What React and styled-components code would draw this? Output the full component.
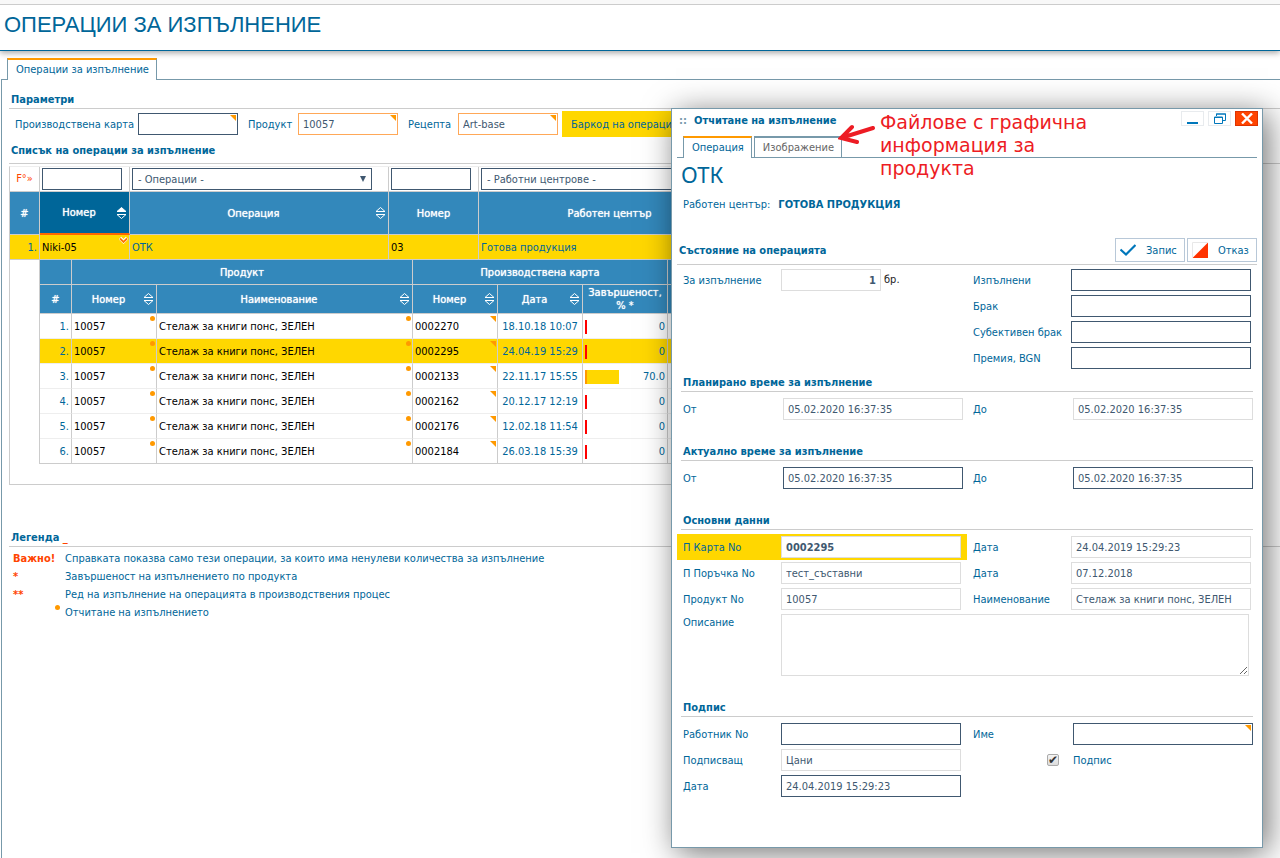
import React from 'react';
import styled, { createGlobalStyle, css } from 'styled-components';

const font = "'DejaVu Sans Condensed', 'Noto Sans', sans-serif";

const blue = '#006699';
const steel = '#7799aa';
const ink = '#405870';
const gold = '#ffd700';
const orange = '#ff9900';
const red = '#ff4400';
const line = '#cccccc';

const GlobalStyle = createGlobalStyle`
  * {
    box-sizing: border-box;
  }

  body {
    background: #fff;
    color: ${blue};
    font-family: ${font};
    font-size: 11px;
    line-height: 14px;
    margin: 0;
  }

  input, select, textarea, button {
    font-family: inherit;
    font-size: 11px;
    margin: 0;
  }
`;

const Page = styled.div`
  min-height: 100vh;
  overflow: hidden;
  position: relative;
`;

const Header = styled.header`
  border-bottom: 1px solid ${blue};
  box-shadow: 0 2px 6px rgba(0, 0, 0, 0.35);

  &::before {
    background: #f8f8f8;
    border-bottom: 1px solid ${line};
    content: '';
    display: block;
    height: 4px;
  }
`;

const H1 = styled.h1`
  font-family: 'Liberation Sans', sans-serif;
  font-size: 22px;
  font-weight: 400;
  line-height: 39px;
  margin: 0;
  padding: 0 4px 6px;
`;

const Tabs = styled.div`
  display: flex;
  gap: 2px;
  padding: ${(props) => (props.$inner ? '0 6px' : '8px 6px 0')};
  ${(props) =>
    props.$inner
      ? css`
          border-bottom: 1px solid ${steel};
          margin: 0 5px;
        `
      : css`
          margin: -1px 0 0 1px;
        `}
`;

const Tab = styled.button`
  background: #fff;
  border: 1px solid ${steel};
  border-bottom: 0;
  border-top: 2px solid ${(props) => (props.$active ? orange : steel)};
  color: ${(props) => (props.$active ? blue : '#666')};
  height: ${(props) => (props.$active ? 22 : 21)}px;
  line-height: 18px;
  margin-bottom: ${(props) => (props.$active ? -1 : 0)}px;
  padding: 0 7px 0 8px;
  position: relative;
`;

const Panel = styled.main`
  border-left: 1px solid ${steel};
  border-top: 1px solid ${steel};
  margin-left: 1px;
  min-height: calc(100vh - 79px);
  padding: 9px 0 0 7px;
`;

const headingHeights = { tall: 27, list: 24 };

const Heading = styled.h3`
  align-items: flex-start;
  border-bottom: 1px solid ${line};
  display: flex;
  font-size: 11px;
  font-weight: 700;
  gap: 2px;
  height: ${(props) => headingHeights[props.$size] || 20}px;
  justify-content: space-between;
  line-height: ${(props) => (props.$size === 'tall' ? 25 : 21)}px;
  margin: ${(props) => (props.$inset ? '0 4px' : 0)};
  padding-left: 2px;

  & > span {
    flex: 1;
  }

  & b {
    color: ${red};
  }
`;

const Params = styled.div`
  display: flex;
  padding: 2px 0 3px;
`;

const Param = styled.div`
  align-items: center;
  background: ${(props) => (props.$marked ? gold : 'transparent')};
  display: flex;
  flex: none;
  padding: 2px 4px 2px ${(props) => (props.$marked ? 9 : 6)}px;

  & label {
    padding-top: 2px;
    width: ${(props) => props.$label}px;
  }
`;

const borders = { edit: ink, set: '#ffa858', read: '#dddddd' };

const Input = styled.input`
  background: #fff;
  border: 1px solid ${(props) => borders[props.$kind || 'edit']};
  border-radius: 0;
  color: ${ink};
  font-weight: ${(props) => (props.$bold ? 700 : 400)};
  height: 22px;
  outline: 0;
  padding: 0 4px;
  text-align: ${(props) => (props.$right ? 'right' : 'left')};
  width: ${(props) => props.$width || 100}px;
`;

const Corner = styled.span`
  display: flex;
  position: relative;

  &::after {
    border-left: 6px solid transparent;
    border-top: 6px solid ${orange};
    content: '';
    position: absolute;
    right: 2px;
    top: 2px;
  }
`;

const SelectBox = styled.span`
  display: block;
  position: relative;
  width: 240px;

  & select {
    appearance: none;
    background: #fff;
    border: 1px solid ${ink};
    border-radius: 0;
    color: ${ink};
    height: 22px;
    padding: 0 5px;
    width: 100%;
  }

  &::after {
    border: 3px solid transparent;
    border-bottom: 0;
    border-top: 6px solid ${ink};
    content: '';
    position: absolute;
    right: 6px;
    top: 8px;
  }
`;

const TableBox = styled.div`
  padding-top: 2px;
`;

const Table = styled.table`
  border-collapse: separate;
  border-spacing: 0;
  table-layout: fixed;

  & td, & th {
    padding: 0 2px;
  }
`;

const Operations = styled(Table)`
  border: 1px solid ${line};
  border-top-color: #eee;
  width: 1002px;
`;

const Orders = styled(Table)`
  border-left: 1px solid ${line};
  margin-left: -1px;
  width: 100%;
`;

const Filter = styled.td`
  border-bottom: 1px solid ${line};
  border-right: 1px solid ${line};
  color: ${red};
  height: 25px;
  text-align: ${(props) => (props.$center ? 'center' : 'left')};
`;

const Th = styled.th`
  background: ${(props) => (props.$sorted ? blue : '#3388bb')};
  border-bottom: 1px solid ${line};
  border-right: 1px solid ${line};
  color: #fff;
  font-weight: 400;
  height: ${(props) => props.$height}px;
  line-height: 13px;
  text-shadow: 0 0 1px #fff;
  ${(props) => props.$sorted && `border-bottom: 2px solid #ff6600;`}
`;

const ThInner = styled.div`
  align-items: center;
  display: flex;

  & span {
    flex: 1;
  }
`;

const Td = styled.td`
  background: ${(props) => (props.$marked ? gold : '#fff')};
  border-bottom: 1px solid ${(props) => (props.$last ? line : '#eeeeee')};
  border-right: 1px solid ${line};
  color: ${(props) => (props.$dark ? '#000' : blue)};
  height: 25px;
  position: relative;
  text-align: ${(props) => props.$align || 'left'};

  &&& {
    padding-top: 2px;
  }
`;

const Dot = styled.i`
  background: ${orange};
  border-radius: 50%;
  height: 5px;
  position: absolute;
  right: 1px;
  top: 2px;
  width: 5px;
`;

const Flag = styled.i`
  border-left: 6px solid transparent;
  border-top: 6px solid ${orange};
  position: absolute;
  right: 1px;
  top: 2px;
`;

const Expand = styled.svg`
  position: absolute;
  right: 1px;
  top: 1px;
`;

const Progress = styled.div`
  align-items: center;
  display: flex;
  justify-content: space-between;
`;

const Bar = styled.i`
  background: ${gold};
  border-left: 2px solid ${(props) => (props.$empty ? '#f00' : orange)};
  height: 14px;
`;

const Detail = styled.td`
  && {
    padding: 0 0 20px;
  }
`;

const Legend = styled.section`
  padding-top: 42px;

  & table {
    border-spacing: 0;
    margin-top: 2px;
  }

  & td, & th {
    height: 18px;
    padding: 2px 0 0 4px;
    position: relative;
    text-align: left;
  }

  & th {
    color: ${red};
    width: 52px;
  }
`;

const Window = styled.section`
  background: #fff;
  border: 1px solid ${steel};
  box-shadow: 5px 5px 30px rgba(0, 0, 0, 0.55);
  padding-bottom: 48px;
  position: absolute;
  right: 17px;
  top: 108px;
  width: 592px;
`;

const TitleBar = styled.div`
  align-items: flex-start;
  display: flex;
  gap: 4px;
  height: 27px;
  padding: 2px 4px 0 7px;

  & h2 {
    flex: 1;
    font-size: 11px;
    line-height: 20px;
    margin: 0;
  }
`;

const Grip = styled.span`
  color: ${steel};
  font-weight: 700;
  line-height: 20px;
  width: 11px;
`;

const WindowButton = styled.button`
  align-items: center;
  background: ${(props) => (props.$close ? '#ff4400' : '#fff')};
  border: 1px solid ${(props) => (props.$close ? '#dd3300' : '#e8ebee')};
  display: flex;
  height: 15px;
  justify-content: center;
  padding: 0;
  width: 23px;
`;

const Body = styled.form`
  padding: 0 5px;
`;

const Operation = styled.h2`
  font-family: 'Noto Sans', sans-serif;
  font-size: 22px;
  font-weight: 400;
  line-height: 32px;
  margin: 0;
  padding-left: 4px;
`;

const Center = styled.p`
  display: flex;
  gap: 8px;
  line-height: 26px;
  margin: 2px 0 20px;
  padding-left: 6px;
`;

const Action = styled.button`
  align-items: center;
  background: #fff;
  border: 1px solid #b8c8d8;
  color: ${blue};
  display: flex;
  gap: 10px;
  height: 24px;
  padding: 0 4px;
  width: 70px;
`;

const Group = styled.section`
  margin-bottom: ${(props) => (props.$first ? 1 : 19)}px;
`;

const Fields = styled.div`
  display: grid;
  grid-template-columns: 1fr 1fr;
  padding-top: ${(props) => (props.$first ? 2 : 4)}px;
`;

const Field = styled.div`
  align-items: center;
  background: ${(props) => (props.$marked ? gold : 'transparent')};
  display: flex;
  grid-column: ${(props) => props.$column || 'auto'};
  min-height: 26px;
  padding: 2px ${(props) => (props.$wide ? 4 : 6)}px 2px 6px;

  & > label {
    flex: 1;
    padding-top: 2px;
  }
`;

const Control = styled.div`
  align-items: center;
  color: #222;
  display: flex;
  gap: 3px;
  width: 180px;
`;

const Description = styled(Field)`
  align-items: flex-start;
  grid-column: 1 / 3;
  padding-right: 8px;

  & textarea {
    background: #fff;
    border: 1px solid #ddd;
    display: block;
    height: 62px;
    width: 468px;
  }
`;

const Signed = styled(Field)`
  gap: 14px;
  justify-content: flex-end;

  & > label {
    flex: none;
    width: 180px;
  }
`;

const Check = styled.input`
  appearance: none;
  background: linear-gradient(#f4f4f4, #dcdcdc);
  border: 1px solid #aaa;
  border-radius: 2px;
  display: grid;
  height: 12px;
  place-items: center;
  width: 12px;

  &:checked::after {
    color: #333;
    content: '✔';
    font-family: 'DejaVu Sans', sans-serif;
    font-size: 12px;
    line-height: 10px;
  }
`;

const Note = styled.aside`
  color: #ed1c24;
  display: flex;
  font-family: 'DejaVu Sans', sans-serif;
  font-size: 19px;
  gap: 4px;
  left: 166px;
  line-height: 23px;
  position: absolute;
  top: 2px;
  width: 260px;

  & svg {
    flex: none;
    margin-top: 12px;
  }
`;

const SortIcon = ({ up }) => (
  <svg width="11" height="12" viewBox="0 0 11 12" fill="none" stroke="#fff">
    <path d="M1 4.5 L5.5 0.5 L10 4.5 Z" fill={up ? '#fff' : 'none'} />
    <path d="M1 7.5 L5.5 11.5 L10 7.5 Z" />
  </svg>
);

const Head = ({ label, sort, ...rest }) => (
  <Th {...rest}>
    {sort ? (
      <ThInner>
        <span>{label}</span>
        <SortIcon up={sort === 'up'} />
      </ThInner>
    ) : (
      label
    )}
  </Th>
);

const TextField = ({ id, label, unit, marked, wide, column, ...rest }) => (
  <Field $marked={marked} $wide={wide} $column={column}>
    <label htmlFor={id}>{label}</label>
    <Control>
      <Input id={id} $width={180} {...rest} />
      {unit}
    </Control>
  </Field>
);

const orders = [
  { card: '0002270', date: '18.10.18 10:07', done: 0 },
  { card: '0002295', date: '24.04.19 15:29', done: 0, marked: true },
  { card: '0002133', date: '22.11.17 15:55', done: 70 },
  { card: '0002162', date: '20.12.17 12:19', done: 0 },
  { card: '0002176', date: '12.02.18 11:54', done: 0 },
  { card: '0002184', date: '26.03.18 15:39', done: 0 },
];

const OrdersTable = () => (
  <Orders>
    <colgroup>
      <col width="32" />
      <col width="85" />
      <col width="256" />
      <col width="85" />
      <col width="85" />
      <col width="85" />
      <col />
    </colgroup>
    <thead>
      <tr>
        <Th $height={25} />
        <Th $height={25} colSpan={2}>Продукт</Th>
        <Th $height={25} colSpan={3}>Производствена карта</Th>
        <Th $height={25} />
      </tr>
      <tr>
        <Head $height={29} label="#" />
        <Head $height={29} label="Номер" sort="none" />
        <Head $height={29} label="Наименование" sort="none" />
        <Head $height={29} label="Номер" sort="none" />
        <Head $height={29} label="Дата" sort="none" />
        <Head $height={29} label="Завършеност, % *" />
        <Th $height={29} />
      </tr>
    </thead>
    <tbody>
      {orders.map((order, i) => {
        const row = { $marked: order.marked, $last: i === orders.length - 1 };
        return (
          <tr key={order.card}>
            <Td {...row} $align="right">{i + 1}.</Td>
            <Td {...row} $dark>10057<Dot /></Td>
            <Td {...row} $dark>Стелаж за книги понс, ЗЕЛЕН<Dot /></Td>
            <Td {...row} $dark>{order.card}<Flag /></Td>
            <Td {...row} $align="center">{order.date}</Td>
            <Td {...row}>
              <Progress>
                <Bar $empty={!order.done} style={{ width: Math.max(2, Math.round(order.done * 0.48)) }} />
                {order.done ? order.done.toFixed(1) : 0}
              </Progress>
            </Td>
            <Td {...row} />
          </tr>
        );
      })}
    </tbody>
  </Orders>
);

const OperationsTable = () => (
  <Operations>
    <colgroup>
      <col width="30" />
      <col width="90" />
      <col width="259" />
      <col width="90" />
      <col width="262" />
      <col />
    </colgroup>
    <thead>
      <tr>
        <Filter $center>F°»</Filter>
        <Filter><Input $width={80} aria-label="Номер на операция" /></Filter>
        <Filter>
          <SelectBox>
            <select aria-label="Операции"><option>- Операции -</option></select>
          </SelectBox>
        </Filter>
        <Filter><Input $width={80} aria-label="Номер на център" /></Filter>
        <Filter>
          <SelectBox>
            <select aria-label="Работни центрове"><option>- Работни центрове -</option></select>
          </SelectBox>
        </Filter>
        <Filter />
      </tr>
      <tr>
        <Head $height={43} label="#" />
        <Head $height={43} label="Номер" sort="up" $sorted />
        <Head $height={43} label="Операция" sort="none" />
        <Head $height={43} label="Номер" />
        <Head $height={43} label="Работен център" />
        <Th $height={43} />
      </tr>
    </thead>
    <tbody>
      <tr>
        <Td $marked $last $align="right">1.</Td>
        <Td $marked $last $dark>
          Niki-05
          <Expand width="9" height="8" viewBox="0 0 9 8" fill="none">
            <path d="M1 2 L4.5 5.5 L8 2" stroke="#fff" strokeWidth="3.4" />
            <path d="M1 2.5 L4.5 6 L8 2.5" stroke="#ff7700" strokeWidth="1.8" />
          </Expand>
        </Td>
        <Td $marked $last>ОТК</Td>
        <Td $marked $last $dark>03</Td>
        <Td $marked $last>Готова продукция</Td>
        <Td $marked $last />
      </tr>
      <tr>
        <td />
        <Detail colSpan={5}><OrdersTable /></Detail>
      </tr>
    </tbody>
  </Operations>
);

const ReportWindow = () => (
  <Window role="dialog" aria-label="Отчитане на изпълнение">
    <TitleBar>
      <Grip>::</Grip>
      <h2>Отчитане на изпълнение</h2>
      <WindowButton aria-label="Минимизиране">
        <svg width="13" height="11" viewBox="0 0 13 11">
          <path d="M1 9h11v2H1z" fill="#0077bb" />
        </svg>
      </WindowButton>
      <WindowButton aria-label="Възстановяване">
        <svg width="13" height="11" viewBox="0 0 13 11" fill="none" stroke="#0077bb">
          <path d="M3.5 3V1H12.500V7.500H10M3 1H13" />
          <path d="M1.500 4H9.500V10.500H1.500Z M1 4.500H10" />
        </svg>
      </WindowButton>
      <WindowButton $close aria-label="Затваряне">
        <svg width="12" height="11" viewBox="0 0 12 11" stroke="#fff" strokeWidth="2.4">
          <path d="M1 0.500L11 10.500M11 0.500L1 10.500" />
        </svg>
      </WindowButton>
    </TitleBar>
    <Tabs $inner>
      <Tab $active>Операция</Tab>
      <Tab>Изображение</Tab>
    </Tabs>
    <Body onSubmit={(e) => e.preventDefault()}>
      <Operation>ОТК</Operation>
      <Center>
        Работен център: <b>ГОТОВА ПРОДУКЦИЯ</b>
      </Center>
      <Group $first>
        <Heading $size="tall">
          <span>Състояние на операцията</span>
          <Action>
            <svg width="16" height="14" viewBox="0 0 16 14" fill="none" stroke="#0077bb" strokeWidth="2.2">
              <path d="M0.500 6.500L6 11.500L15.500 2" />
            </svg>
            <span>Запис</span>
          </Action>
          <Action>
            <svg width="16" height="16" viewBox="0 0 16 16">
              <path d="M0.500 15V0.500H15" fill="none" stroke="#e8e8e8" />
              <path d="M16 0.500V16H0.500Z" fill="#ff3300" />
            </svg>
            <span>Отказ</span>
          </Action>
        </Heading>
        <Fields $first>
          <TextField id="todo" label="За изпълнение" unit="бр." $width={100} $kind="read" $bold $right defaultValue="1" readOnly />
          <TextField id="done" label="Изпълнени" />
          <TextField id="waste" label="Брак" column={2} />
          <TextField id="subjective" label="Субективен брак" column={2} />
          <TextField id="bonus" label="Премия, BGN" column={2} />
        </Fields>
      </Group>
      <Group>
        <Heading $inset>Планирано време за изпълнение</Heading>
        <Fields>
          <TextField id="planFrom" label="От" wide $kind="read" defaultValue="05.02.2020 16:37:35" readOnly />
          <TextField id="planTo" label="До" wide $kind="read" defaultValue="05.02.2020 16:37:35" readOnly />
        </Fields>
      </Group>
      <Group>
        <Heading $inset>Актуално време за изпълнение</Heading>
        <Fields>
          <TextField id="from" label="От" wide defaultValue="05.02.2020 16:37:35" />
          <TextField id="to" label="До" wide defaultValue="05.02.2020 16:37:35" />
        </Fields>
      </Group>
      <Group>
        <Heading $inset>Основни данни</Heading>
        <Fields>
          <TextField id="card" label="П Карта No" marked $kind="read" $bold defaultValue="0002295" readOnly />
          <TextField id="cardDate" label="Дата" $kind="read" defaultValue="24.04.2019 15:29:23" readOnly />
          <TextField id="order" label="П Поръчка No" $kind="read" defaultValue="тест_съставни" readOnly />
          <TextField id="orderDate" label="Дата" $kind="read" defaultValue="07.12.2018" readOnly />
          <TextField id="product" label="Продукт No" $kind="read" defaultValue="10057" readOnly />
          <TextField id="name" label="Наименование" $kind="read" defaultValue="Стелаж за книги понс, ЗЕЛЕН" readOnly />
          <Description>
            <label htmlFor="description">Описание</label>
            <textarea id="description" />
          </Description>
        </Fields>
      </Group>
      <Heading $inset>Подпис</Heading>
      <Fields>
        <TextField id="worker" label="Работник No" />
        <Field $wide>
          <label htmlFor="workerName">Име</label>
          <Corner><Input id="workerName" $width={180} /></Corner>
        </Field>
        <TextField id="signer" label="Подписващ" $kind="read" defaultValue="Цани" readOnly />
        <Signed $wide>
          <Check id="signed" type="checkbox" defaultChecked />
          <label htmlFor="signed">Подпис</label>
        </Signed>
        <TextField id="signDate" label="Дата" defaultValue="24.04.2019 15:29:23" />
      </Fields>
    </Body>
    <Note>
      <svg width="38" height="24" viewBox="0 0 38 24" fill="none" stroke="#ed1c24" strokeWidth="4" strokeLinecap="round">
        <path d="M35 5L3 15M14 4L3 15L19 19" />
      </svg>
      <span>Файлове с графична информация за продукта</span>
    </Note>
  </Window>
);

export default () => (
  <Page>
    <GlobalStyle />
    <Header>
      <H1>ОПЕРАЦИИ ЗА ИЗПЪЛНЕНИЕ</H1>
    </Header>
    <Tabs>
      <Tab $active>Операции за изпълнение</Tab>
    </Tabs>
    <Panel>
      <Heading>Параметри</Heading>
      <Params>
        <Param $label={123}>
          <label htmlFor="fCard">Производствена карта</label>
          <Corner><Input id="fCard" /></Corner>
        </Param>
        <Param $label={50}>
          <label htmlFor="fProduct">Продукт</label>
          <Corner><Input id="fProduct" $kind="set" defaultValue="10057" /></Corner>
        </Param>
        <Param $label={50}>
          <label htmlFor="fRecipe">Рецепта</label>
          <Corner><Input id="fRecipe" $kind="set" defaultValue="Art-base" /></Corner>
        </Param>
        <Param $label={123} $marked>
          <label htmlFor="fBarcode">Баркод на операция</label>
          <Input id="fBarcode" />
        </Param>
      </Params>
      <Heading $size="list">Списък на операции за изпълнение</Heading>
      <TableBox>
        <OperationsTable />
      </TableBox>
      <Legend>
        <Heading><span>Легенда <b>_</b></span></Heading>
        <table>
          <tbody>
            <tr><th>Важно!</th><td>Справката показва само тези операции, за които има ненулеви количества за изпълнение</td></tr>
            <tr><th>*</th><td>Завършеност на изпълнението по продукта</td></tr>
            <tr><th>**</th><td>Ред на изпълнение на операцията в производствения процес</td></tr>
            <tr><th><Dot /></th><td>Отчитане на изпълнението</td></tr>
          </tbody>
        </table>
      </Legend>
    </Panel>
    <ReportWindow />
  </Page>
);
